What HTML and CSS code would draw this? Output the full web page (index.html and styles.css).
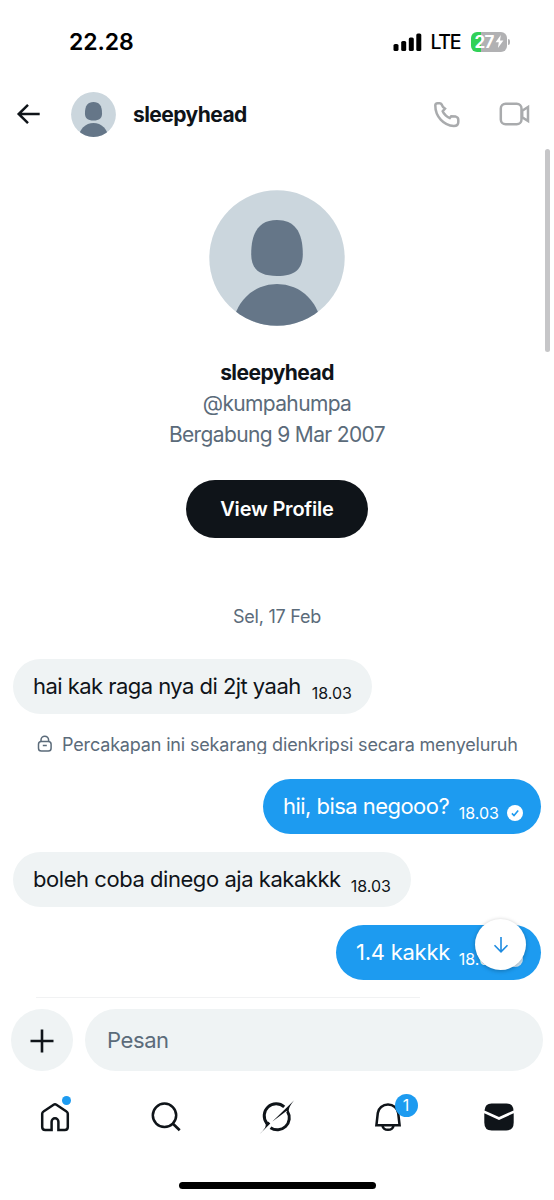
FILE: index.html
```html
<!DOCTYPE html>
<html lang="id">
<head>
<meta charset="utf-8">
<title>sleepyhead</title>
<link rel="stylesheet" href="styles.css">
</head>
<body>
<div class="screen">
  <div class="status">
    <span class="clock">22.28</span>
    <div class="status-right">
      <svg class="signal" width="29" height="18" viewBox="0 0 29 18"><rect x="0.5" y="11" width="5" height="7" rx="1.6"/><rect x="8.2" y="8" width="5" height="10" rx="1.6"/><rect x="15.8" y="4.4" width="5" height="13.6" rx="1.6"/><rect x="23.3" y="0.5" width="5" height="17.5" rx="1.6"/></svg>
      <span class="network">LTE</span>
      <div class="battery"><span>27</span><svg width="9" height="13" viewBox="0 0 9 13"><path d="M5.8 0 0.6 7.2h3.2L2.9 13 8.4 5.4H5z" fill="#fff"/></svg></div>
      <i class="battery-cap"></i>
    </div>
  </div>

  <header class="header">
    <svg class="back" width="26" height="22" viewBox="0 0 26 22"><path d="M23.7 11H3M12 1.8 2.7 11l9.3 9.2" fill="none" stroke="#0f1419" stroke-width="2.5"/></svg>
    <svg class="avatar-small" width="45" height="45" viewBox="0 0 136 136"><use href="#person"/></svg>
    <span class="header-name">sleepyhead</span>
    <svg class="phone" width="27" height="27" viewBox="0 0 27 27"><path d="M2.3 4.6Q2.3 2.3 4.6 2.3H6.8Q8 2.3 8.6 3.4L10 6 12 7.6 9.7 10.300Q10.500 12.400 12.600 14.300 14.700 16.300 16.800 17L18.200 15.300 22.800 15.600Q25.300 16.300 25.300 18.800V21Q25.300 25 20.800 25C10.500 24.500 2.300 15.500 2.300 4.600Z"/></svg>
    <svg class="video" width="31" height="24" viewBox="0 0 31 24"><rect x="1.8" y="1.8" width="20.7" height="20.4" rx="4.8"/><path d="M23.2 8.800 29 5v14l-5.800-3.800z"/></svg>
  </header>

  <main class="chat">
    <section class="profile">
      <svg class="avatar-large" width="136" height="136" viewBox="0 0 136 136">
        <defs><clipPath id="round"><circle cx="68" cy="68" r="67.7"/></clipPath></defs>
        <g id="person" clip-path="url(#round)"><rect width="136" height="136" fill="#cbd6dd"/><path d="M68 30C85 30 93.800 41 93.800 64C93.800 79 86 86 68 86S42.200 79 42.200 64C42.200 41 51 30 68 30Z" fill="#657688"/><circle cx="68" cy="138" r="44" fill="#657688"/></g>
      </svg>
      <span class="profile-name">sleepyhead</span>
      <span class="handle">@kumpahumpa</span>
      <span class="joined">Bergabung 9 Mar 2007</span>
      <button class="view"><span>View Profile</span></button>
    </section>
    <div class="date"><span>Sel, 17 Feb</span></div>
    <div class="bubble in first"><span class="m1">hai kak raga nya di 2jt yaah</span><time>18.03</time></div>
    <div class="encrypted">
      <svg width="16" height="18" viewBox="0 0 16 18"><rect x="1.5" y="6.4" width="12.6" height="9.6" rx="2.8"/><path d="M4 6V5a3.8 3.8 0 0 1 7.6 0v1M5.8 10.5h4"/></svg>
      <span>Percakapan ini sekarang dienkripsi secara menyeluruh</span>
    </div>
    <div class="bubble out second"><span class="m2">hii, bisa negooo?</span><time>18.03</time><svg class="check" width="16" height="16" viewBox="0 0 16 16"><circle cx="8" cy="8" r="8" fill="#fff"/><path d="m4.9 8.4 2.1 2.1 4.2-5" fill="none" stroke="#1d9bf0" stroke-width="1.6"/></svg></div>
    <div class="bubble in third"><span class="m3">boleh coba dinego aja kakakkk</span><time>18.03</time></div>
    <div class="bubble out fourth"><span class="m4">1.4 kakkk</span><time>18.03</time><svg class="check" width="16" height="16" viewBox="0 0 16 16"><circle cx="8" cy="8" r="8" fill="#d4e8f6"/></svg></div>
    <i class="edge"></i>
    <i class="scrollbar"></i>
    <button class="jump"><svg width="16" height="18" viewBox="0 0 16 18"><path d="M8 1v14.5M1.5 9.3 8 15.8l6.5-6.5" fill="none" stroke="#1d8be0" stroke-width="1.6"/></svg></button>
  </main>

  <div class="composer">
    <button class="add"><svg width="24" height="24" viewBox="0 0 24 24"><path d="M12 .5v23M.5 12h23" stroke="#0f1419" stroke-width="2.6"/></svg></button>
    <div class="field"><span>Pesan</span></div>
  </div>

  <nav class="tabs">
    <div class="tab"><svg width="32" height="32" viewBox="0 0 32 32"><path d="M12.6 29H6.2Q3.2 29 3.2 26V12.8Q3.2 11.3 4.5 10.5L14.6 3.8Q16 2.9 17.4 3.8L27.5 10.5Q28.8 11.3 28.8 12.8V26Q28.8 29 25.8 29H19.4V20.7A3.4 3.4 0 0 0 12.6 20.7Z" fill="none" stroke="#0f1419" stroke-width="2.5"/></svg><i class="dot"></i></div>
    <div class="tab"><svg width="32" height="32" viewBox="0 0 32 32"><circle cx="14.5" cy="14.3" r="11.7" fill="none" stroke="#0f1419" stroke-width="2.5"/><path d="m22.7 22.5 7 6.7" stroke="#0f1419" stroke-width="2.7"/></svg></div>
    <div class="tab"><svg width="36" height="36" viewBox="0 0 36 36"><path d="M25.2 7.8A12 12 0 0 0 7.8 24.2M11.5 28.7A12 12 0 0 0 28.5 12.5" fill="none" stroke="#0f1419" stroke-width="3"/><path d="M35.2 1.2 13.4 22.5 27.5 12 30.2 15.2C28.7 9.6 31.2 6.4 35.2 1.2ZM.8 35 11.3 24.5 9.5 22.8 6.3 23.5C8 28.5 4.5 30.8.8 35Z" fill="#0f1419"/></svg></div>
    <div class="tab"><svg width="32" height="32" viewBox="0 0 32 32"><path d="M4.4 24.3 5.8 12A10.25 9.4 0 0 1 26.2 12L27.6 24.3ZM10.5 25A5.6 4.7 0 0 0 21.5 25" fill="none" stroke="#0f1419" stroke-width="2.5"/></svg><i class="count">1</i></div>
    <div class="tab"><svg width="32" height="32" viewBox="0 0 32 32"><path d="M1.5 9.5Q2 2.5 8.5 2.5H23.5Q30 2.5 30.5 9.5L16 16ZM1.3 12.2 16 19 30.7 12.2V21.5Q30.7 29.5 23.2 29.5H8.8Q1.3 29.5 1.3 21.5Z" fill="#0f1419"/></svg></div>
  </nav>
  <div class="home-bar"></div>
</div>
</body>
</html>
```
FILE: styles.css
```css
* { box-sizing: border-box; }
body { margin: 0; background: #fff; font-family: Inter, "Liberation Sans", sans-serif; color: #0f1419; }
svg, i { display: block; flex: none; }
button { border: 0; padding: 0; font: inherit; display: flex; align-items: center; justify-content: center; }
span, time { white-space: nowrap; }
.screen { width: 554px; height: 1200px; display: flex; flex-direction: column; overflow: hidden; }
.status { height: 82px; flex: none; display: flex; justify-content: space-between; align-items: center; padding: 1px 44px 0 69px; color: #000; }
.clock { font-size: 23px; font-weight: 600; letter-spacing: -.1px; }
.status-right { display: flex; align-items: center; }
.network { font-size: 19.5px; font-weight: 500; margin: 1px 11px 0 9px; letter-spacing: -1.4px; }
.battery { width: 36px; height: 20px; border-radius: 6px; background: linear-gradient(90deg, #32d158 10px, #b1b1b3 10px); color: #fff; font-size: 17px; font-weight: 700; letter-spacing: -.7px; display: flex; align-items: center; justify-content: center; gap: 1px; }
.battery-cap { width: 2px; height: 6px; margin-left: 1px; border-radius: 0 2px 2px 0; background: #b1b1b3; }
.header { height: 67px; flex: none; display: flex; align-items: center; padding: 0 24px 3px 15px; }
.back { margin-left: 1px; }
.avatar-small { margin-left: 29px; }
.header-name { margin: 0 auto 0 17px; font-size: 21px; font-weight: 700; letter-spacing: -.55px; }
.phone { margin-right: 39px; }
.phone, .video { fill: none; stroke: #a9abad; stroke-width: 2.5; }
.chat { height: 851px; flex: none; position: relative; padding: 41px 13px 0; display: flex; flex-direction: column; }
.profile { display: flex; flex-direction: column; align-items: center; }
.profile-name { font-size: 21px; font-weight: 700; line-height: 31px; margin-top: 31px; letter-spacing: -.55px; }
.handle, .joined { font-size: 21px; line-height: 31px; color: #5b6b7a; letter-spacing: -.64px; }
.view { width: 182px; height: 58px; margin-top: 30px; border-radius: 29px; background: #0f1419; color: #fff; font-size: 20px; font-weight: 600; letter-spacing: -.2px; }
.date { height: 24px; margin-top: 67px; line-height: 24px; text-align: center; color: #5b6b7a; font-size: 18px; letter-spacing: -.25px; }
.bubble { height: 55px; flex: none; border-radius: 28px; display: flex; align-items: center; padding: 0 20px 2px; font-size: 22px; }
.bubble time { font-size: 16px; margin: 14px 0 0 auto; }
.in { background: #eff3f4; }
.out { background: #1d9bf0; color: #fff; align-self: flex-end; }
.check { margin: 15px -2px 0 8px; }
.m1, .m2 { letter-spacing: -.54px; }
.m3 { letter-spacing: -.45px; }
.m4 { letter-spacing: -.25px; }
.first { width: 359px; margin-top: 30px; }
.second { width: 278px; margin-top: 25px; }
.third { width: 398px; margin-top: 18px; }
.fourth { width: 205px; margin-top: 18px; }
.encrypted { height: 20px; margin-top: 20px; padding-left: 24px; display: flex; align-items: center; color: #5b6b7a; font-size: 18px; line-height: 22px; overflow: hidden; letter-spacing: -.16px; }
.encrypted span { padding-top: 2px; }
.encrypted svg { margin-right: 9px; fill: none; stroke: #5b6b7a; stroke-width: 1.5; }
.edge { height: 1px; width: 384px; margin: 17px 0 0 23px; background: #f1f2f3; }
.scrollbar { position: absolute; left: 545px; top: 0; width: 5px; height: 203px; border-radius: 3px; background: #c6c6c8; }
.jump { position: absolute; left: 475px; top: 770px; width: 51px; height: 51px; border-radius: 50%; background: #fff; box-shadow: 0 1px 4px rgba(0,0,0,.28); }
.composer { height: 80px; flex: none; display: flex; padding: 9px 11px 0; gap: 12px; }
.add { width: 62px; height: 62px; flex: none; border-radius: 50%; background: #eff3f4; }
.add svg { margin-top: 1px; }
.field { height: 62px; flex: 1; border-radius: 31px; background: #eff3f4; padding-left: 22px; display: flex; align-items: center; font-size: 22px; color: #5b6b7a; letter-spacing: -.4px; }
.tabs { height: 74px; flex: none; display: grid; grid-template-columns: repeat(5, 111px); margin-left: -.5px; }
.tab { position: relative; display: flex; align-items: center; justify-content: center; }
.dot { position: absolute; left: 62px; top: 16px; width: 9px; height: 9px; border-radius: 50%; background: #1d9bf0; }
.count { position: absolute; left: 62px; top: 14px; width: 23px; height: 23px; border-radius: 50%; background: #1d9bf0; color: #fff; font-size: 16px; line-height: 23px; font-style: normal; text-align: center; }
.home-bar { width: 197px; height: 7px; margin: 28px auto 0; border-radius: 4px; background: #000; }
```
